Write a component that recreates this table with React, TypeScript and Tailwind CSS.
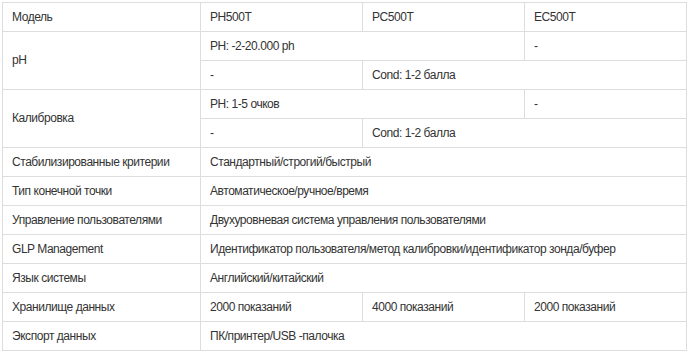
import React from "react";

const td = "border border-[#dddddd] px-[9px] h-[29px] py-0 align-middle text-left font-normal";

export default function App() {
  return (
    <div className="w-[690px] h-[353px] bg-white pt-[2px] pl-[2px]" style={{ fontFamily: '"Liberation Sans", Arial, sans-serif' }}>
      <table className="table-fixed border-collapse w-[684px] text-[12px] tracking-[-0.45px] text-[#333333] leading-[17px]">
        <colgroup>
          <col className="w-[198px]" />
          <col className="w-[162px]" />
          <col className="w-[162px]" />
          <col className="w-[162px]" />
        </colgroup>
        <tbody>
          <tr>
            <td className={td}>Модель</td>
            <td className={td}>PH500T</td>
            <td className={td}>PC500T</td>
            <td className={td}>EC500T</td>
          </tr>
          <tr>
            <td className={td} rowSpan={2}>pH</td>
            <td className={td} colSpan={2}>PH: -2-20.000 ph</td>
            <td className={td}>-</td>
          </tr>
          <tr>
            <td className={td}>-</td>
            <td className={td} colSpan={2}>Cond: 1-2 балла</td>
          </tr>
          <tr>
            <td className={td} rowSpan={2}>Калибровка</td>
            <td className={td} colSpan={2}>PH: 1-5 очков</td>
            <td className={td}>-</td>
          </tr>
          <tr>
            <td className={td}>-</td>
            <td className={td} colSpan={2}>Cond: 1-2 балла</td>
          </tr>
          <tr>
            <td className={td}>Стабилизированные критерии</td>
            <td className={td} colSpan={3}>Стандартный/строгий/быстрый</td>
          </tr>
          <tr>
            <td className={td}>Тип конечной точки</td>
            <td className={td} colSpan={3}>Автоматическое/ручное/время</td>
          </tr>
          <tr>
            <td className={td}>Управление пользователями</td>
            <td className={td} colSpan={3}>Двухуровневая система управления пользователями</td>
          </tr>
          <tr>
            <td className={td}>GLP Management</td>
            <td className={td} colSpan={3}>Идентификатор пользователя/метод калибровки/идентификатор зонда/буфер</td>
          </tr>
          <tr>
            <td className={td}>Язык системы</td>
            <td className={td} colSpan={3}>Английский/китайский</td>
          </tr>
          <tr>
            <td className={td}>Хранилище данных</td>
            <td className={td}>2000 показаний</td>
            <td className={td}>4000 показаний</td>
            <td className={td}>2000 показаний</td>
          </tr>
          <tr>
            <td className={td}>Экспорт данных</td>
            <td className={td} colSpan={3}>ПК/принтер/USB -палочка</td>
          </tr>
        </tbody>
      </table>
    </div>
  );
}
